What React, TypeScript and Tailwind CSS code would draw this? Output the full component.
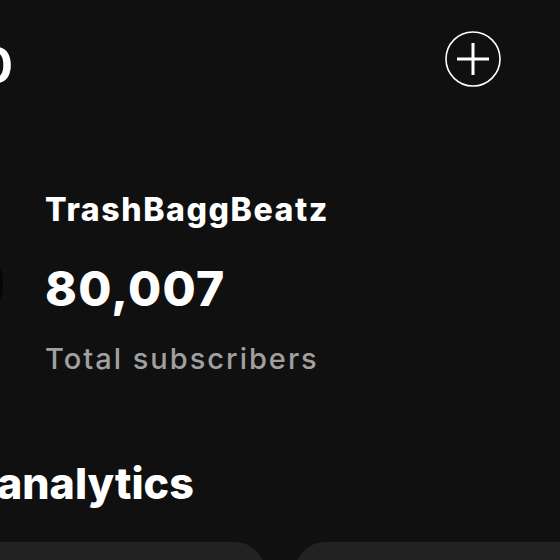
export default function App() {
  return (
    <div className="w-[560px] h-[560px] overflow-hidden bg-[#101010] text-white font-['Inter',sans-serif]">
      {/* Header */}
      <div className="flex items-start justify-between pt-[31px] pr-[59px]">
        <span className="ml-[-20px] mt-[7px] text-[49px] leading-[56px] font-bold">0</span>
        <button className="w-[56px] h-[56px]">
          <svg viewBox="0 0 56 56" className="w-[56px] h-[56px]" fill="none" stroke="white">
            <circle cx="28" cy="28" r="27" strokeWidth="1.6" />
            <path d="M12 28h32M28 12v32" strokeWidth="3" />
          </svg>
        </button>
      </div>

      {/* Profile */}
      <div className="flex items-center mt-[96px] gap-[42px]">
        <div className="ml-[-91px] w-[94px] h-[94px] rounded-full bg-[#050505] shrink-0" />
        <div className="flex flex-col">
          <span className="text-[32px] leading-[40px] font-extrabold tracking-[1.6px]">TrashBaggBeatz</span>
          <span className="mt-[33px] text-[48px] leading-[52px] font-extrabold tracking-[1.3px]">80,007</span>
          <span className="mt-[26px] text-[29px] leading-[36px] text-[#a0a0a0] font-medium tracking-[2px]">Total subscribers</span>
        </div>
      </div>

      {/* Analytics */}
      <h2 className="mt-[80px] ml-[-3px] text-[43px] leading-[52px] font-extrabold">analytics</h2>

      <div className="flex gap-[30px] mt-[33px] ml-[-40px]">
        <div className="w-[305px] h-[120px] rounded-[30px] bg-[#222222] shrink-0" />
        <div className="w-[305px] h-[120px] rounded-[30px] bg-[#222222] shrink-0" />
      </div>
    </div>
  );
}
